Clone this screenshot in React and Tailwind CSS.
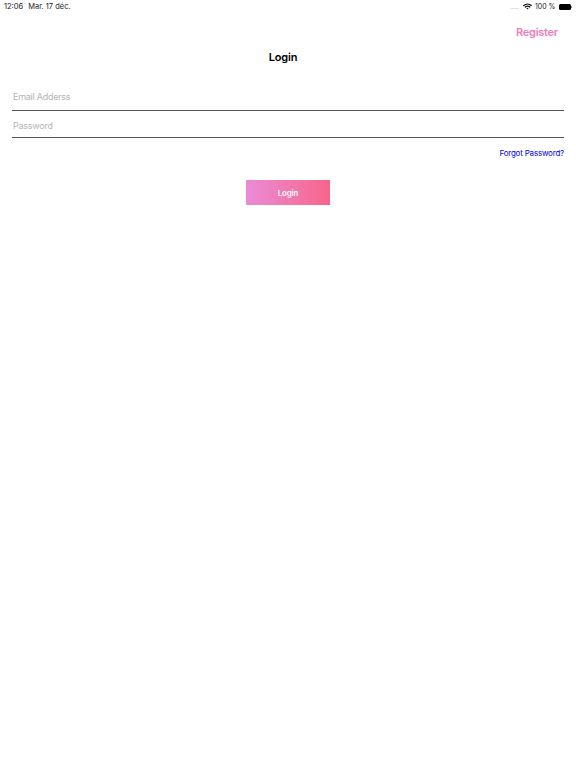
export default function App() {
  return (
    <div className="relative min-h-[768px] w-[576px] bg-white font-['Inter',sans-serif] text-black">
      <div className="flex h-3 items-center justify-between pl-1 pr-[4px] pt-px text-[7.5px] leading-3 text-[#222]">
        <div className="flex gap-[5px]">
          <span>12:06</span>
          <span>Mar. 17 déc.</span>
        </div>
        <div className="flex items-center">
          <span className="mr-[4px] text-[5px] leading-[10px] tracking-[0.3px] text-[#999]">.....</span>
          <svg width="9" height="7" viewBox="0 0 18 14" className="mr-[3px]" fill="none" stroke="#111" strokeLinecap="round">
            <path d="M1.5 5 A11 11 0 0 1 16.5 5" strokeWidth="2.4" />
            <path d="M4.5 8 A7 7 0 0 1 13.5 8" strokeWidth="2.4" />
            <path d="M9 13 L6.8 10.6 A3.2 3.2 0 0 1 11.2 10.6 Z" fill="#111" stroke="none" />
          </svg>
          <span className="mr-[3px] text-[7px]">100 %</span>
          <span className="h-[6px] w-[12px] rounded-[1.5px] bg-black" />
          <span className="ml-[0.5px] h-[2px] w-[1px] bg-[#888]" />
        </div>
      </div>
      <div className="flex h-[28px] items-center justify-end pr-[18px] pt-[13px]">
        <span className="text-[11px] font-semibold tracking-[-0.25px] text-[#f07cc0]">Register</span>
      </div>
      <div className="flex h-[25px] items-end justify-center pr-[10px]">
        <h1 className="text-[11px] leading-[16px] font-semibold tracking-[-0.2px]">Login</h1>
      </div>
      <div className="px-3 pt-[12px]">
        <div className="flex h-[34px] items-center border-b border-[#555] pl-px pt-[6px] text-[9px] tracking-[-0.25px] text-[#b5b5b5]">Email Adderss</div>
        <div className="flex h-[27px] items-center border-b border-[#555] pl-px pt-[4px] text-[9px] tracking-[-0.25px] text-[#b5b5b5]">Password</div>
        <div className="flex justify-end pt-[10px] text-[8px] leading-[10px] tracking-[-0.2px] text-[#0000ee]">Forgot Password?</div>
        <div className="flex justify-center pt-[22px]">
          <button className="h-[25px] w-[84px] bg-gradient-to-r from-[#ea8ad8] to-[#f7648a] text-[8px] font-semibold tracking-[-0.2px] text-white">Login</button>
        </div>
      </div>
    </div>
  );
}
